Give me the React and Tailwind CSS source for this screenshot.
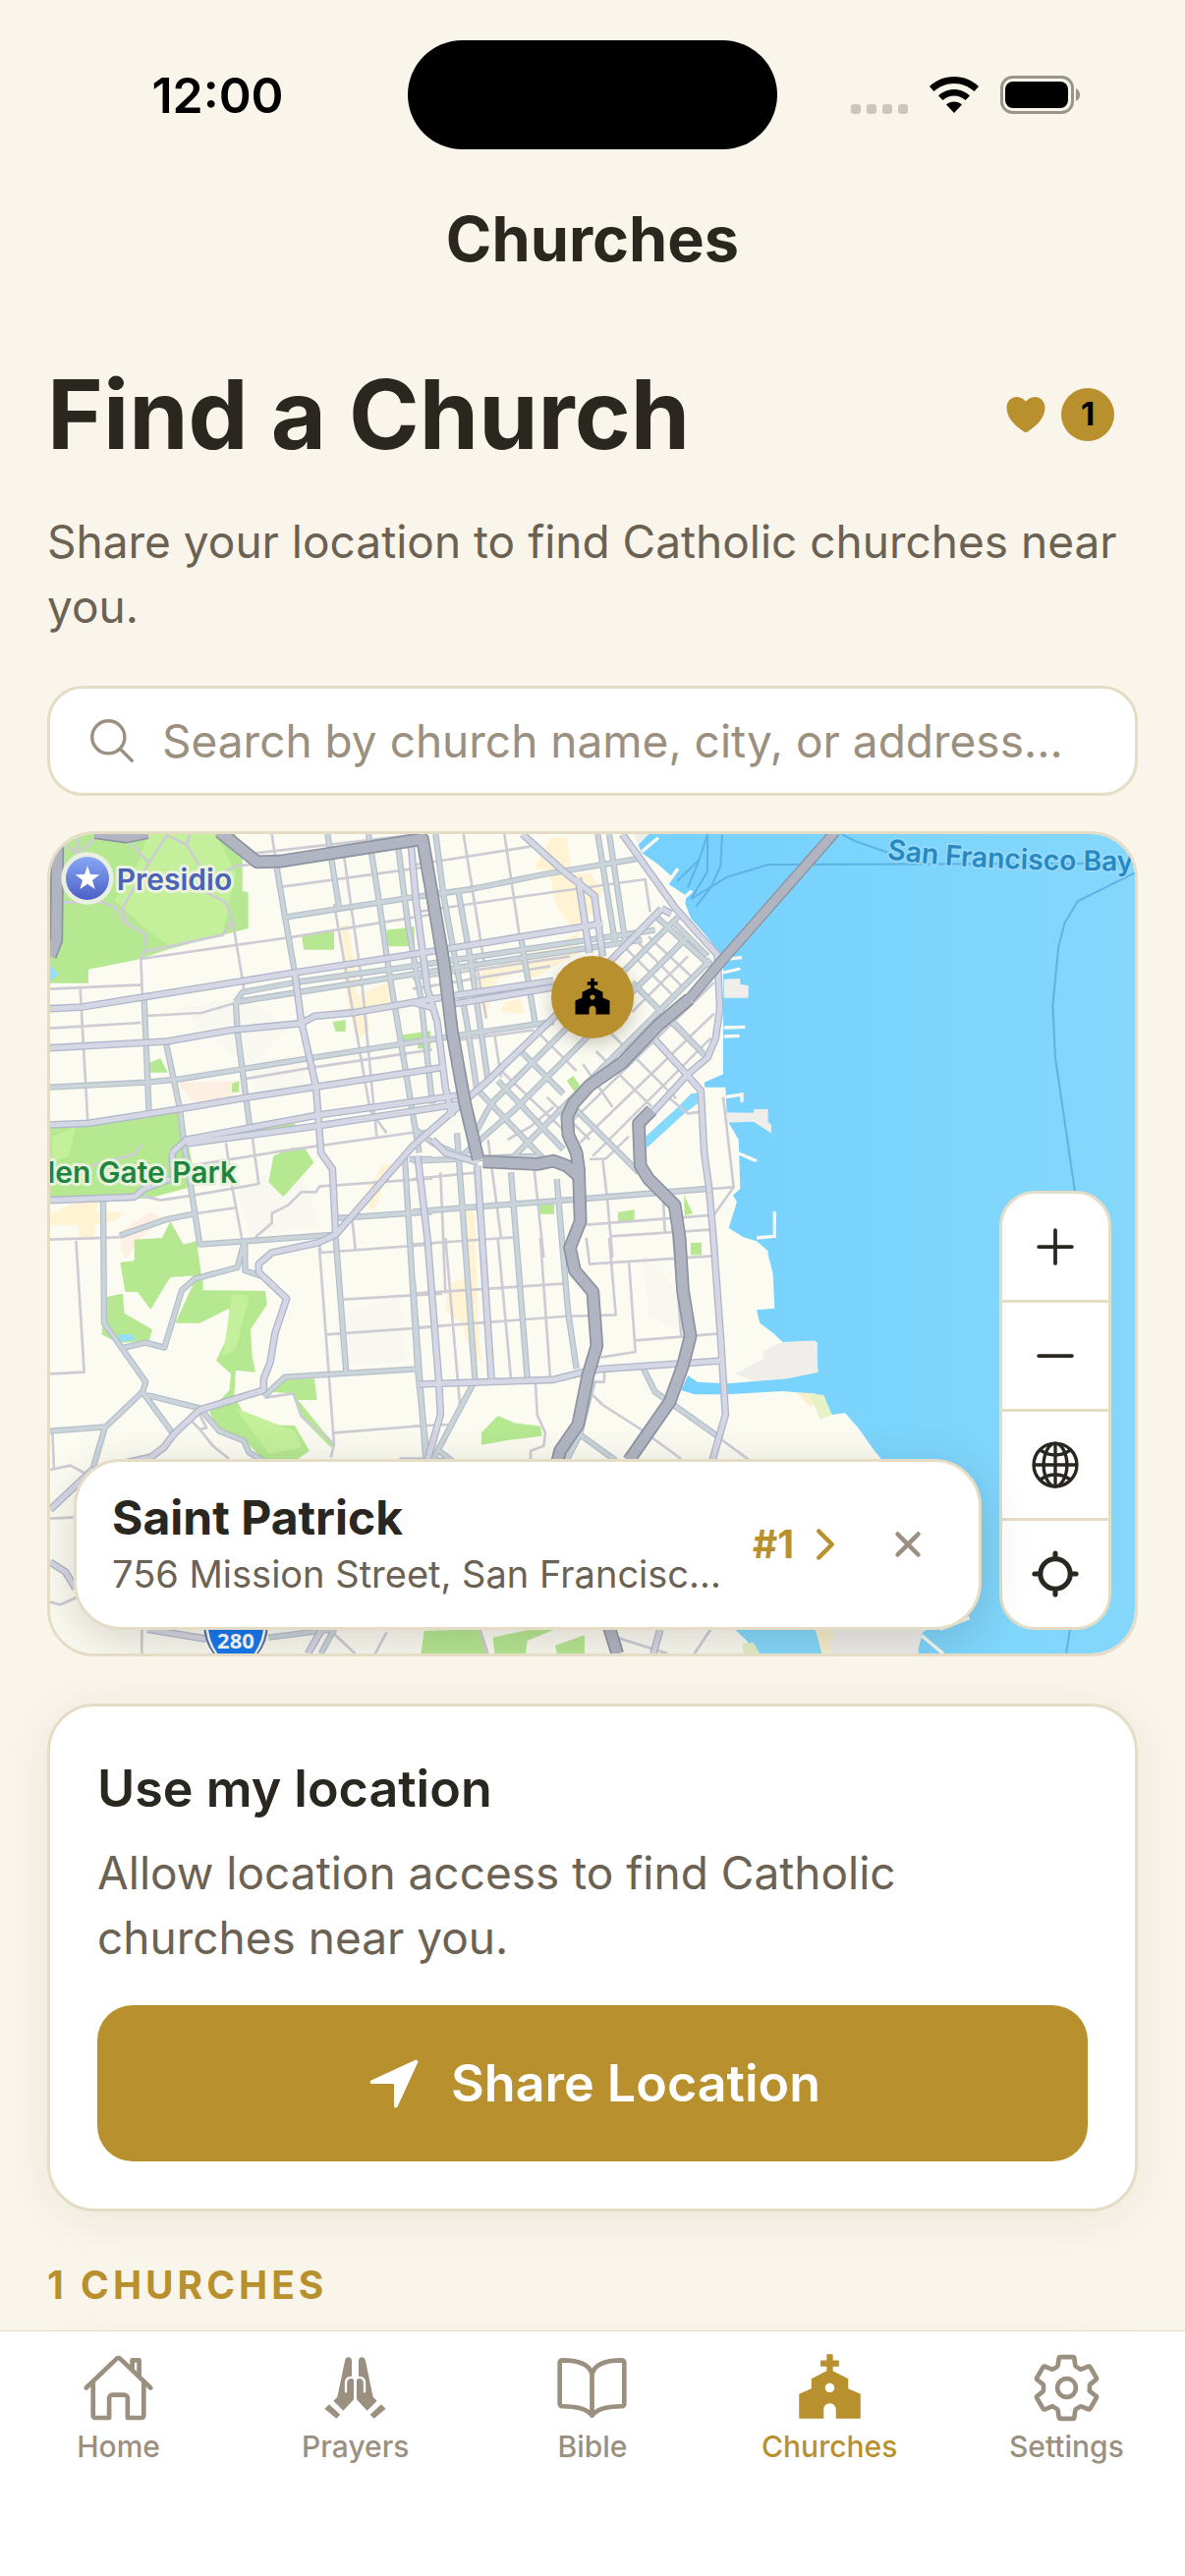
import React, { useState } from 'react';
import {
    IoAdd,
    IoBookOutline,
    IoChevronForward,
    IoClose,
    IoGlobeOutline,
    IoHeart,
    IoHomeOutline,
    IoLocate,
    IoNavigate,
    IoRemove,
    IoSearchOutline,
    IoSettingsOutline,
} from 'react-icons/io5';
import { MdChurch } from 'react-icons/md';

const PARKS = [
    'M33 60L100 27H600L620 90V200L638 205V315L600 325L500 350L390 380L300 410L150 440V482H33Z',
    'M33 920L160 905L425 875L440 900L480 1100L330 1140L33 1135Z',
    'M715 1010L770 985H810L838 1030L745 1135L700 1090Z',
    'M290 1265L375 1260L400 1210L440 1280L480 1270L495 1375L400 1380L340 1478L300 1425H262L247 1335L290 1330Z',
    'M205 1440L255 1430L260 1490L345 1540L335 1575L240 1580L190 1555Z',
    'M475 1390H500L500 1420L690 1422L695 1465L645 1540L650 1620L660 1670L600 1665L595 1740L640 1830L780 1833L825 1910L790 1935H680L620 1870L545 1850L520 1790L580 1725L585 1675L540 1635L575 1560L580 1475L490 1520H415Z',
    'M700 1730L755 1690H840L848 1755H790L900 1890L890 1900L800 1810L775 1735Z',
    'M800 335L900 320V380H808Z',
    'M1060 320L1145 310V370H1065Z',
    'M895 600L935 595V630H905Z',
    'M1110 640L1195 628V682H1155V660H1110Z',
    'M335 725L370 712L392 755H335Z',
    'M588 790L610 780V815H588Z',
    'M470 960L780 910V920L480 968Z',
    'M1610 780L1630 765L1655 800L1635 815Z',
    'M1523 1160L1572 1157V1187H1525Z',
    'M1767 1182L1817 1173V1210H1767Z',
    'M1968 1128L1995 1185L1970 1192Z',
    'M1989 1275H2022V1312H1989Z',
    'M1350 1892V1855L1400 1803L1450 1825L1530 1835L1535 1865L1430 1878Z',
    'M1175 2460L1340 2455L1370 2530H1165Z',
    'M1385 2480L1490 2458L1570 2457L1490 2490L1485 2530H1390Z',
    'M1575 2505L1665 2473V2530H1580Z',
];

const SHOPS = [
    'M920 305L940 300L960 400L970 520L1060 480L1085 540L1000 560L1008 625L970 660L945 560L925 440Z',
    'M33 1190L110 1150L180 1148L175 1180L255 1182L240 1205L170 1220L165 1270L125 1260L115 1222H33Z',
    'M1050 1035L1110 1035L1050 1100L1020 1180L995 1150L1010 1100Z',
    'M1560 40L1610 35L1625 150L1680 145L1720 200L1690 270L1645 300L1650 390L1500 470L1490 440L1400 470L1360 590L1320 500L1360 430L1560 370L1640 330L1580 250L1555 140L1510 130Z',
    'M1420 540L1470 530L1480 575L1410 570Z',
    'M1300 1160L1330 1190L1340 1520L1350 1640L1325 1630L1290 1520L1240 1480L1250 1400L1300 1380Z',
];

const MINOR = [
    'M33 500L310 487M33 620L310 603M325 582L495 573L600 542M125 500L148 905M310 405L315 530M310 408L780 340L1200 272M590 290L625 500',
    'M660 85L1140 30M710 27L720 95M725 190L1200 125M930 90L985 480L1030 950M900 240L1010 870L1060 940M625 775L820 742L1200 685',
    'M460 1040L740 995L1200 930M570 970L590 1110L620 1270M650 950L670 1095L470 1130M480 1185L600 1168M900 1100L1200 1078M955 1200L965 1295M855 1275L860 1305L1200 1280',
    'M660 1258L710 1215L710 1185L760 1160L800 1120L845 1120L855 1103L890 1100M160 1040L290 1005L315 975M310 1130L370 1145L470 1130',
    'M190 235L230 250L265 300L322 330L325 380L310 405M325 385L560 335L590 290L570 235L500 200M265 40L335 115L390 30L450 60L500 140M450 60L460 27M335 115L255 250L265 300M80 60L115 85L120 27M115 85L180 35M33 235L190 235M560 145L600 125L660 118',
    'M33 1265L245 1258M112 1265L137 1670L33 1675M855 1290L900 1890L890 1930M875 1555L1230 1530M930 1448L1230 1430M900 1855L1180 1833M40 1850L45 1970M33 1968L95 1955L160 1990M33 2117L110 2113M465 1820L490 1845L530 1895L580 1935M490 1800L510 1840L490 1845M690 1748L775 1735L800 1805L880 1870L900 1895M33 2372L65 2380L120 2355M313 2450V2530',
    'M1150 120L1500 65M1295 27L1360 430M1420 27L1480 430M1150 265L1420 225L1850 165L1865 265M1140 470L1620 400M1140 500L1560 430M1330 400L1365 590M1390 640L1410 770M1250 660L1510 625',
    'M1820 350L1970 500M1980 400L1810 570M2060 480L1610 920M2060 575L1650 970M2050 650L1690 1010M1790 375L1930 515M1860 340L2000 470M1740 630L1945 835M1700 690L1870 860M1660 730L1750 860M1530 640L1640 750M1570 860L1500 920L1430 960M1550 830L1680 960M1400 740L1600 930',
    'M1680 1020L1730 1018L1800 950M1720 1020L1735 1150L1750 1320M1140 1080L1340 1060M1140 1280L1450 1258M1225 1060L1240 1430M1370 960L1410 1260M1510 1040L1540 1320M1670 1220L2060 1190L2120 1105L2088 830M1745 1255L2050 1235M1905 1140L1910 1240M2055 1110L2120 1105M1920 830L1980 880L2020 875',
    'M1140 1430L1600 1400M1140 1535L1600 1500L1760 1495L1740 1260M1240 1260L1285 1780M1400 1260L1440 1690M1530 1260L1560 1690M1670 1260L1680 1340L2055 1315M1800 1330L1820 1608L1715 1625M1820 1573L2070 1553M1930 1180L1960 1560',
    'M1140 1835L1250 1830M1515 1700L1520 1800L1545 1855L1540 1895L1500 1910V1940M1690 1700H1725V1665M1690 1740L1720 1770L1830 1840L1960 1935M2075 1870L2170 1940M2050 2455L2000 2530M1730 2470L1920 2530M1345 2455L1370 2530M1025 2530L1060 2465M890 2460L965 2530',
];

const LOCAL = [
    'M320 530L335 880M388 670L430 870L440 960L490 1280L905 1250M600 540L605 630L645 940M725 130L750 280L780 450M880 27L915 250M1005 27L1040 250L1065 430L1110 700L1160 1000M1095 60L1125 300L1165 530L1200 850',
    'M33 800L325 785L430 775L820 712L1290 640L1570 600M600 540L620 510L780 480L1140 430L1880 320M600 540L790 510L1140 455L1840 350M755 280L1140 220L1320 195L1540 150L1840 100',
    'M195 1140L198 1520L325 1700L315 1730L200 1840L165 1960M33 1850L200 1837M315 1730L410 1860M330 1740L490 1780L550 1850L625 1880L640 1915L690 1945M245 1253L390 1203L480 1185M905 1200L1200 1180',
    'M625 1275L605 1350L475 1385L435 1420L382 1595L325 1580L258 1595M628 1275V1360L690 1380M905 1260L937 1670M685 1745L750 1685L1155 1660M1115 1000L1155 1660L1185 1940M1130 1020L1200 1020',
    'M1210 27L1235 220L1305 600L1335 800M1280 205L1320 430L1370 780M1705 27L1760 370M1740 27L1790 360M1470 340L1515 610M1140 1180L1670 1140L2040 1110M1140 1025L1530 1010',
    'M1950 280L1380 850L1320 960M1975 345L1450 870L1290 1010M2050 410L1500 960L1450 1010M1885 280L2050 430M1940 300L2040 400M1340 810L1560 1040M1400 780L1600 990M1470 690L1600 820M1640 870L1830 1060M1810 480L2040 710M1940 605L2030 700',
    'M1275 940L1330 1690M1440 1060L1490 1690M1580 1080L1600 1320L1615 1490L1640 1660M1140 1390L1180 1940M1325 1705L1200 1940M1650 1860L1760 1940M1845 1660L1880 1730L2070 1865M1690 1700L1650 1860L1610 1940M700 2480L900 2455L860 2530',
    'M1150 930L1200 970L1290 1010M1100 1940L1260 1940L1220 1910',
];

const ARTERIAL = [
    'M33 560L130 555L780 450L1200 385L1720 300M33 680L390 660L590 625L800 605L840 583L960 572L1090 550L1200 530L1570 475M1240 550L1600 490',
    'M33 915L150 910L430 866L630 832L1240 738M405 1000L450 960L850 885L1300 822M450 972L850 918L1290 850M405 1000L410 1080',
    'M780 450L800 600L845 800L860 1000L895 1050L905 1250M1135 60L1150 230L1185 500L1215 600L1240 800L1260 890',
    'M1900 255L1640 520L1370 780L1140 980L905 1250L850 1275L710 1305L670 1340V1365L755 1445L720 1550L705 1640L685 1690V1725L490 1785L410 1860L380 1900L340 1930L270 1945',
    'M1780 27L1840 110L1940 250L2010 330L2070 395L2078 560L2065 650L2040 710L1980 760L1870 880M1880 655L1980 765L2020 810L2030 1000L2045 1110L2058 1260L2080 1560L2095 1800L2055 1940',
    'M1475 27L1600 140L1695 215L1720 400M1645 160L1680 390M1900 255L1930 270M1155 1010L1185 1260L1220 1700L1225 1800L1185 1940M1337 1040L1352 1260L1380 1690M1200 960L1240 1000L1340 1030M1140 540L1210 560',
    'M1160 1707L1570 1693L1660 1670L1720 1660L2085 1635M33 1145L290 1135L320 1110L400 1080M33 2090L160 1970L270 1945M33 2250L80 2280L110 2330M330 2455L510 2485M820 2530L860 2460M1895 2457L1875 2530',
];

const FREEWAY = [
    'M550 20L665 112L735 110L1170 42L1235 420L1260 630L1300 850L1340 1020M1355 1027L1520 1035L1570 1025L1610 1040L1645 1070',
    'M1985 530L1890 610L1780 725L1680 795L1630 850L1612 890L1615 945L1640 1000L1647 1050L1652 1210L1620 1290L1635 1360L1690 1425L1702 1590L1675 1680L1645 1830L1590 1910L1580 1950',
    'M1870 870L1830 910L1835 1040L1860 1080L1940 1160L1955 1260L1965 1420L1988 1560L1965 1650L1925 1760L1800 1940M1740 2450L1765 2530',
    'M55 60L52 350L33 400M170 22L265 35L330 22',
];

const Layer = ({ paths, stroke, width }) => (
    <g fill="none" stroke={stroke} strokeWidth={width} strokeLinejoin="round">
        {paths.map((d) => <path key={d} d={d} />)}
    </g>
);

const CityMap = () => (
    <svg
        viewBox="33 27 3312 2502"
        preserveAspectRatio="xMidYMid slice"
        className="absolute inset-0 h-full w-full"
        role="img"
        aria-label="Map of San Francisco"
    >
        <defs>
            <linearGradient id="badge" x1="0" y1="0" x2="0" y2="1">
                <stop offset="0" stopColor="#86a8f8" />
                <stop offset="1" stopColor="#4d5fc4" />
            </linearGradient>
            <linearGradient id="bay" x1="0" y1="0" x2="1" y2="0">
                <stop offset="0" stopColor="#76d0fd" />
                <stop offset="0.5" stopColor="#7cd5fc" />
                <stop offset="1" stopColor="#85d7fb" />
            </linearGradient>
            <path id="bay-label" d="M2588 103Q2900 143 3420 138" />
        </defs>
        <rect x="0" y="0" width="3400" height="2600" fill="#fcfbf2" />
        <path d="M420 560L620 520L760 620L640 740Z M650 720L800 700L810 810L660 820Z M600 1120L780 1010L860 1230L640 1250Z M900 1500L1100 1440L1120 1640L920 1650Z M1840 1300L1950 1420L1980 1560L1860 1500Z" fill="#f9f8f0" />
        <g fill="#fff3d4">{SHOPS.map((d) => <path key={d} d={d} />)}</g>
        <path d="M420 785L600 780L590 830L470 845Z M250 1240L340 1180L380 1200L300 1270L265 1325L248 1290Z" fill="#fdf0e2" />
        <g fill="#b6e892">{PARKS.map((d) => <path key={d} d={d} />)}</g>
        <path d="M330 27H540L600 150L560 330L400 370L330 320L230 230L300 120Z M40 950L110 920L90 1010L40 1030Z M590 1430L640 1440L600 1600L560 1620Z M600 1780L780 1850L800 1900L700 1920Z" fill="#c4f09c" />
        <path d="M33 425L60 455L33 475Z M240 1555H285L292 1570L250 1578Z" fill="#93ddfd" />

        {/* Bay shoreline */}
        <path
            d="M1860 27L1828 60L1840 85L1890 120L1930 155L1922 180L1975 215L1972 240L1990 285L2030 330L2070 380L2088 402V760L2030 785L2032 800H2095L2100 900L2135 960L2140 1110L2118 1130L2130 1150L2105 1230L2150 1258L2190 1270L2225 1300V1310L2195 1265L2225 1310L2240 1370L2245 1475L2190 1480L2200 1520L2240 1550L2270 1578H2375V1670L2280 1690L2180 1698L2100 1705L2010 1700L1980 1680L1960 1725L2000 1738H2100L2270 1728L2340 1735L2390 1760L2420 1800L2460 1795L2500 1840L2550 1910L2575 1940L2820 2425L2700 2460L2680 2500L2690 2560H3400V0H1860Z"
            fill="url(#bay)"
        />
        <path d="M2015 815L2010 850L1970 880L1855 985L1852 950L1900 905L1940 870L1990 820Z M2125 2457H2370L2390 2530H2190L2160 2490Z" fill="#84d9fd" />
        <path d="M2090 470L2140 468V485L2165 490V527H2090Z M2098 877L2180 878L2182 867H2225V905L2235 915V940L2180 905L2098 908Z M2125 1675L2210 1630V1605L2270 1578L2340 1574H2370L2378 1670L2280 1690L2180 1697Z M2415 2455H2700L2680 2530H2415Z M1815 27H1860L1828 60Z" fill="#efeeea" />
        <path d="M1840 80L1890 38M1920 175L1950 132M1965 225L1992 200M2088 410L2145 404M2088 450L2140 438M2090 618L2155 616M2090 645L2138 643M2095 830L2145 822V845M2130 1000L2190 1025M2245 1180V1255L2190 1260M2840 2420L2750 2455M2695 2475L2760 2530" fill="none" stroke="#fbfaf2" strokeWidth="10" />
        <path d="M2310 1732L2370 1735L2360 1780Z M2370 2455H2430L2410 2530H2390Z" fill="#f8efcd" />
        <path d="M2350 1735L2395 1740L2420 1800L2385 1815Z M2145 2500L2180 2495L2200 2530H2150Z" fill="#e6f1c6" />

        {/* Ferry routes */}
        <g fill="none" stroke="#5fb2e3" strokeWidth="6" strokeLinejoin="round">
            <path d="M2040 27L2015 105L1948 170M2040 27V140L1990 225M2085 27L2080 125L2050 190L2005 248M2015 105L1980 190M1990 225L2100 158L2225 120L3340 116M2450 27L2490 48L2610 90" />
            <path d="M3345 145L3170 232L3130 300L3112 370L3094 550L3102 710L3130 900L3165 1140M3147 2455L3135 2530" />
        </g>

        <Layer paths={MINOR} stroke="#cdccd4" width="8" />
        <Layer paths={LOCAL} stroke="#b3becb" width="19" />
        <Layer paths={LOCAL} stroke="#cad4d9" width="12" />
        <Layer paths={ARTERIAL} stroke="#b0b7ca" width="23" />
        <Layer paths={ARTERIAL} stroke="#d6d7e4" width="15" />
        <Layer paths={['M2430 20L2070 430L1985 530']} stroke="#8b92a0" width="34" />
        <Layer paths={['M2430 20L2070 430L1985 530']} stroke="#b1b5c1" width="26" />
        <Layer paths={FREEWAY} stroke="#8b92a0" width="41" />
        <Layer paths={FREEWAY} stroke="#b1b5c1" width="31" />

        <circle cx="147" cy="162" r="80" fill="#e9f0e2" />
        <circle cx="147" cy="162" r="66" fill="url(#badge)" />
        <path d="M147 124L156 150L184 151L162 168L170 195L147 179L124 195L132 168L110 151L138 150Z" fill="#fff" />
        <g
            fontFamily="Inter, 'Liberation Sans', sans-serif"
            fontWeight="600"
            strokeLinejoin="round"
            paintOrder="stroke"
        >
            <text x="236" y="197" fontSize="90" fill="#4c62b8" stroke="#e9f3df" strokeWidth="18">Presidio</text>
            <text x="603" y="1093" fontSize="90" textAnchor="end" fill="#1e853e" stroke="#e6f2dc" strokeWidth="18">Golden Gate Park</text>
            <text fontSize="85" fill="#2889c2" stroke="#98dbfa" strokeWidth="10">
                <textPath href="#bay-label">San Francisco Bay</textPath>
            </text>
        </g>

        {/* Interstate shield */}
        <path d="M502 2440H698Q700 2500 655 2545H545Q500 2500 502 2440Z" fill="#5c78a8" />
        <path d="M508 2440H692Q692 2500 650 2545H550Q508 2500 508 2440Z" fill="#fff" />
        <path d="M515 2440H685Q684 2500 640 2550H560Q516 2500 515 2440Z" fill="#1478f0" />
        <text x="600" y="2514" fontSize="66" fontWeight="700" textAnchor="middle" fill="#fff" fontFamily="'Noto Sans', sans-serif">280</text>
    </svg>
);

const PrayingHands = ({ className }) => (
    <svg viewBox="0 0 225 225" className={className} aria-hidden="true">
        {['', 'translate(225 0) scale(-1 1)'].map((transform) => (
            <g key={transform} transform={transform}>
                <path d="M81 30Q83 19 92 19Q102 19 102 31V80L108 90V148L76 182L46 152L58 140Z" fill="currentColor" />
                <path d="M84 124V98Q84 81 100 81H112V100" fill="none" stroke="#fff" strokeWidth="7" strokeLinecap="round" />
                <path d="M92 120V94Q93 85 100 85Q108 86 108 96V130H92Z" fill="currentColor" />
                <path d="M19 176L33 163L67 194L55 206Z" fill="currentColor" />
            </g>
        ))}
    </svg>
);

const StatusBar = () => (
    <div className="grid grid-cols-[1fr_376px_1fr] items-center pt-[41px] text-black">
        <span className="justify-self-center pl-7 text-[50px] font-semibold leading-[60px]">12:00</span>
        <div className="h-[111px] rounded-full bg-black" />
        <div className="flex items-center gap-[22px] justify-self-center pr-8">
            <div className="flex gap-[6px] pt-7">
                {[0, 1, 2, 3].map((dot) => (
                    <span key={dot} className="h-[10px] w-[10px] rounded-[3px] bg-[#cac7bb]" />
                ))}
            </div>
            <svg viewBox="0 0 50 37" className="h-[37px] w-[50px]" aria-hidden="true">
                <path d="M25 0C35 0 44 4 50 10L45.500 15C40 10 33 7 25 7S10 10 4.500 15L0 10C6 4 15 0 25 0Z" />
                <path d="M25 13C31 13 37 15.500 41 19.500L36.500 24C33.500 21.500 29.500 19.500 25 19.500S16.500 21.500 13.500 24L9 19.500C13 15.500 19 13 25 13Z" />
                <path d="M25 25.500C28 25.500 31 26.500 33 28.500L25 37L17 28.500C19 26.500 22 25.500 25 25.500Z" />
            </svg>
            <svg viewBox="0 0 82 39" className="h-[39px] w-[82px]" aria-hidden="true">
                <rect x="1.500" y="1.500" width="72" height="36" rx="11" fill="none" stroke="#98958c" strokeWidth="3" />
                <rect x="5" y="6" width="64" height="27" rx="8" />
                <path d="M77 13Q81 15 81 19.500T77 26Z" fill="#98958c" />
            </svg>
        </div>
    </div>
);

const controls = [
    { label: 'Zoom in', Icon: IoAdd, size: 'h-[60px] w-[60px]' },
    { label: 'Zoom out', Icon: IoRemove, size: 'h-[60px] w-[60px]' },
    { label: 'Show whole area', Icon: IoGlobeOutline, size: 'h-[54px] w-[54px]' },
    { label: 'Locate me', Icon: IoLocate, size: 'h-[54px] w-[54px] [&_*]:[stroke-width:48px]' },
];

const tabs = [
    { name: 'Home', Icon: IoHomeOutline },
    { name: 'Prayers', Icon: PrayingHands },
    { name: 'Bible', Icon: IoBookOutline },
    { name: 'Churches', Icon: MdChurch },
    { name: 'Settings', Icon: IoSettingsOutline },
];

const App = () => {
    const [query, setQuery] = useState('');
    const [activeTab, setActiveTab] = useState('Churches');
    const [showPreview, setShowPreview] = useState(true);

    return (
        <div className="flex h-screen flex-col bg-[#faf5ea] font-[Inter,'Liberation_Sans',sans-serif] text-[#2a2620]">
            <StatusBar />
            <h2 className="mt-[52px] text-center text-[63px] font-bold leading-[78px]">Churches</h2>

            <main className="min-h-0 flex-1 overflow-hidden px-12 pt-20">
                <div className="flex items-center justify-between">
                    <h1 className="text-[97px] font-bold leading-[120px]">Find a Church</h1>
                    <button type="button" aria-label="Saved churches" className="flex items-center gap-3 px-6">
                        <IoHeart className="h-12 w-12 text-[#b8902d]" />
                        <span className="flex h-[54px] w-[54px] items-center justify-center rounded-full bg-[#b8902d] text-[33px] font-bold text-black">1</span>
                    </button>
                </div>
                <p className="mt-9 text-[46px] leading-[66px] text-[#6b6254]">
                    Share your location to find Catholic churches near you.
                </p>

                <label className="mt-12 flex h-28 items-center gap-6 rounded-[36px] border-3 border-[#e5dcc5] bg-white px-9">
                    <IoSearchOutline className="h-[54px] w-[54px] shrink-0 text-[#9b9080]" />
                    <input
                        type="text"
                        value={query}
                        onChange={(e) => setQuery(e.target.value)}
                        aria-label="Search churches"
                        placeholder="Search by church name, city, or address..."
                        className="min-w-0 flex-1 bg-transparent text-[46px] outline-none placeholder:text-[#9b9080]"
                    />
                </label>

                <section className="relative mt-9 h-[840px] overflow-hidden rounded-[48px] border-3 border-[#e5dcc5]">
                    <CityMap />
                    <button
                        type="button"
                        aria-label="Saint Patrick"
                        onClick={() => setShowPreview(true)}
                        className="absolute left-1/2 top-[166px] flex h-[84px] w-[84px] -translate-x-1/2 -translate-y-1/2 items-center justify-center rounded-full bg-[#b8902d] text-black shadow-[0_6px_18px_rgba(0,0,0,0.2)]"
                    >
                        <MdChurch className="h-[42px] w-[42px]" />
                    </button>

                    <div className="absolute bottom-6 right-6 flex w-[114px] flex-col divide-y-3 divide-[#e5dcc5] overflow-hidden rounded-[36px] border-3 border-[#e5dcc5] bg-white">
                        {controls.map(({ label, Icon, size }) => (
                            <button key={label} type="button" aria-label={label} className="box-content flex h-[108px] items-center justify-center">
                                <Icon className={size} />
                            </button>
                        ))}
                    </div>

                    {showPreview && (
                        <article className="absolute bottom-6 left-6 right-[156px] flex items-center rounded-[48px] border-3 border-[#e5dcc5] bg-white py-7 pl-9 pr-12 shadow-[0_12px_48px_rgba(42,38,32,0.18)]">
                            <div className="flex min-w-0 flex-1 flex-col gap-1">
                                <h3 className="text-[48px] font-bold leading-[57px]">Saint Patrick</h3>
                                <p className="truncate text-[38px] leading-[51px] text-[#6b6254]">756 Mission Street, San Francisc...</p>
                            </div>
                            <span className="ml-6 text-[39px] font-bold text-[#b8902d]">#1</span>
                            <IoChevronForward className="ml-2 h-12 w-12 text-[#b8902d]" />
                            <button type="button" aria-label="Close" onClick={() => setShowPreview(false)} className="ml-9">
                                <IoClose className="h-12 w-12 text-[#9b9080]" />
                            </button>
                        </article>
                    )}
                </section>

                <section className="mt-12 rounded-[48px] border-3 border-[#e5dcc5] bg-white p-12 shadow-[0_6px_48px_rgba(42,38,32,0.07)]">
                    <h3 className="text-[52px] font-semibold leading-[72px]">Use my location</h3>
                    <p className="mt-4 text-[46px] leading-[66px] text-[#6b6254]">
                        Allow location access to find Catholic churches near you.
                    </p>
                    <button type="button" className="mt-9 flex w-full items-center justify-center gap-7 rounded-[36px] bg-[#b8902d] py-12 text-[52px] font-semibold leading-[63px] text-white">
                        <IoNavigate className="h-[60px] w-[60px]" />
                        Share Location
                    </button>
                </section>

                <h4 className="mt-[51px] text-[39px] font-bold uppercase leading-[48px] tracking-[4px] text-[#b8902d]">1 Churches</h4>
                <div className="mt-9 h-48 rounded-[48px] border-3 border-[#e5dcc5] bg-white shadow-[0_6px_48px_rgba(42,38,32,0.07)]" />
            </main>

            <nav className="relative grid grid-cols-5 border-t border-[#e5dfc8] bg-white pb-[114px] pt-5">
                {tabs.map(({ name, Icon }) => (
                    <button
                        key={name}
                        type="button"
                        onClick={() => setActiveTab(name)}
                        className={`flex flex-col items-center gap-1 text-[30px] font-medium leading-9 ${activeTab === name ? 'text-[#b8902d]' : 'text-[#9b9080]'}`}
                    >
                        <Icon className="h-[75px] w-[75px]" />
                        {name}
                    </button>
                ))}
            </nav>
        </div>
    );
};

export default App;
